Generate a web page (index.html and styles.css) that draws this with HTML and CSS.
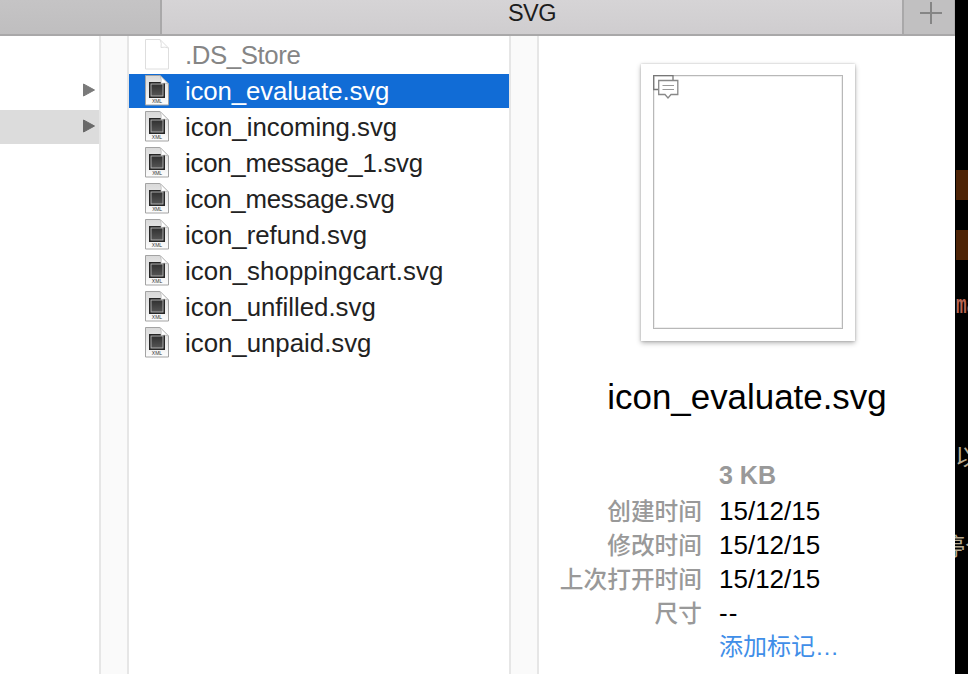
FILE: index.html
```html
<!DOCTYPE html>
<html lang="zh-CN">
<head>
<meta charset="utf-8">
<title>SVG</title>
<link rel="stylesheet" href="styles.css">
</head>
<body>
<svg width="0" height="0" class="defs" aria-hidden="true">
  <defs>
    <linearGradient id="paper" x1="0" y1="0" x2="0" y2="1"><stop offset="0" stop-color="#d9d9d9"/><stop offset="1" stop-color="#fdfdfd"/></linearGradient>
    <linearGradient id="chip" x1="0" y1="0" x2="0" y2="1"><stop offset="0" stop-color="#303030"/><stop offset="1" stop-color="#555"/></linearGradient>
    <symbol id="xml" viewBox="0 0 26 32">
      <path d="M1.500 1.500H16L24.500 10V31H1.500Z" fill="url(#paper)" stroke="#a3a3a3"/>
      <rect x="5" y="8" width="16" height="16" fill="#262626"/>
      <rect x="7" y="10" width="12" height="12" fill="url(#chip)" stroke="#b8b8b8" stroke-width=".9"/>
      <path d="M16 1.500Q18 5 17 9.500Q21 8.500 24.500 10Z" fill="#fff" stroke="#b5b5b5" stroke-width=".7"/>
      <text x="13" y="29.300" text-anchor="middle" class="xml-label">XML</text>
    </symbol>
  </defs>
</svg>
<div class="screen">
  <main class="finder">
    <header class="tabs">
      <div class="tab"></div>
      <div class="tab active">SVG</div>
      <div class="add"><svg width="24" height="24" viewBox="0 0 24 24"><path d="M1 12H23M12 1V23" stroke="#858585" stroke-width="2"/></svg></div>
    </header>
    <div class="columns">
      <section class="parent">
        <div class="folder"><svg width="14" height="16" viewBox="0 0 14 16"><path d="M1.500 2L12.500 8L1.500 14Z"/></svg></div>
        <div class="folder current"><svg width="14" height="16" viewBox="0 0 14 16"><path d="M1.500 2L12.500 8L1.500 14Z"/></svg></div>
      </section>
      <div class="gutter"></div>
      <section class="files">
        <div class="file hidden"><svg class="icon" viewBox="0 0 26 32"><path d="M1.500 1.500H16L24.500 10V31H1.500ZM16 1.500Q18 5 17 9.500Q21 8.500 24.500 10" fill="#fff" stroke="#dedede"/></svg><span>.DS_Store</span></div>
        <div class="file selected"><svg class="icon"><use href="#xml"/></svg><span>icon_evaluate.svg</span></div>
        <div class="file"><svg class="icon"><use href="#xml"/></svg><span>icon_incoming.svg</span></div>
        <div class="file snug"><svg class="icon"><use href="#xml"/></svg><span>icon_message_1.svg</span></div>
        <div class="file snug"><svg class="icon"><use href="#xml"/></svg><span>icon_message.svg</span></div>
        <div class="file"><svg class="icon"><use href="#xml"/></svg><span>icon_refund.svg</span></div>
        <div class="file roomy"><svg class="icon"><use href="#xml"/></svg><span>icon_shoppingcart.svg</span></div>
        <div class="file"><svg class="icon"><use href="#xml"/></svg><span>icon_unfilled.svg</span></div>
        <div class="file"><svg class="icon"><use href="#xml"/></svg><span>icon_unpaid.svg</span></div>
      </section>
      <div class="gutter"></div>
      <section class="preview">
        <div class="sheet"><div class="page"><svg width="28" height="26" viewBox="0 0 28 26" fill="none"><path d="M5 14.500H.7V.7H20V5" stroke="#777" stroke-width="1.300"/><path d="M5.700 5.500H24.800V19.500H18L15 23L12 19.500H5.700Z" fill="#fff" stroke="#888" stroke-width="1.300"/><path d="M9.500 10.500H21M9.500 14.500H21" stroke="#999"/></svg></div></div>
        <h1>icon_evaluate.svg</h1>
        <dl>
          <dt></dt><dd class="size">3 KB</dd>
          <dt>创建时间</dt><dd>15/12/15</dd>
          <dt>修改时间</dt><dd>15/12/15</dd>
          <dt>上次打开时间</dt><dd>15/12/15</dd>
          <dt>尺寸</dt><dd class="dashes">--</dd>
          <dt></dt><dd class="tag">添加标记…</dd>
        </dl>
      </section>
    </div>
  </main>
  <aside class="editor">
    <div class="mark"></div>
    <div class="mark second"></div>
    <div class="code name">ma</div>
    <div class="code zh">以</div>
    <div class="code zh last">停个</div>
  </aside>
</div>
</body>
</html>
```
FILE: styles.css
```css
* { box-sizing: border-box; }
body { margin: 0; overflow: hidden; background: #000; font-family: "Liberation Sans", "Noto Sans CJK SC", sans-serif; }
.defs { position: absolute; }
.screen { display: flex; width: 968px; height: 674px; }
.finder { width: 955px; flex: none; background: #fff; display: flex; flex-direction: column; }
.tabs { display: flex; height: 36px; border-bottom: 2px solid #a9a8a9; background: #c1c0c1; }
.tab { width: 162px; border-right: 2px solid #a9a8a9; background: linear-gradient(#c5c4c5, #bfbebf); }
.tab.active { width: 742px; background: linear-gradient(#d6d4d6, #cfcdcf); font-size: 23.5px; letter-spacing: -.5px; line-height: 26px; text-align: center; color: #1c1c1c; }
.add { flex: 1; border-right: 1px solid #b1b0b1; padding: 1px 0 0 15px; }
.add svg { display: block; }
.columns { display: flex; flex: 1; }
.parent { width: 99px; padding-top: 38px; }
.folder { height: 34px; margin-bottom: 2px; display: flex; align-items: center; justify-content: flex-end; padding: 0 3px 2px 0; }
.folder path { fill: #7a7a7a; stroke: #7a7a7a; stroke-linejoin: round; }
.folder.current { background: #dcdcdc; }
.folder.current path { fill: #696969; stroke: #696969; }
.gutter { width: 30px; border: solid #e6e6e6; border-width: 0 2px; background: #fafafa; }
.files { width: 380px; padding-top: 2px; }
.file { display: flex; align-items: flex-start; height: 34px; margin-bottom: 2px; padding-left: 15px; gap: 15px; font-size: 25.8px; line-height: 35px; color: #222; }
.icon { width: 26px; height: 32px; flex: none; }
.xml-label { font: 5px "Liberation Sans", sans-serif; fill: #333; }
.file.hidden { color: #858585; letter-spacing: -.4px; }
.file.selected { background: #116cd6; color: #fff; letter-spacing: -.13px; }
.file.snug { letter-spacing: -.25px; }
.file.roomy { letter-spacing: .08px; }
.preview { flex: 1; padding-top: 28px; display: flex; flex-direction: column; align-items: center; }
.sheet { width: 214px; height: 277px; margin-left: 1px; padding: 11px 11px 12px 12px; background: #fff; box-shadow: 0 2px 5px rgba(0,0,0,.3), 0 0 2px rgba(0,0,0,.2); }
.page { width: 190px; height: 254px; border: 1px solid #b8b8b8; outline: 1px solid #eee; outline-offset: -2px; }
.page svg { position: relative; display: block; margin: -1px 0 0 -1px; }
h1 { margin: 35px 0 0; font-size: 34.9px; line-height: 41px; font-weight: 400; color: #000; }
dl { display: grid; grid-template-columns: 163px 220px; column-gap: 17px; grid-template-rows: 36px repeat(5, 34px); line-height: 34px; margin: 41px 0 0; align-self: flex-start; }
dt, dd { margin: 0; white-space: nowrap; }
dt { text-align: right; color: #999; font-size: 23.7px; line-height: 32px; font-weight: 500; font-family: "Noto Sans CJK SC", sans-serif; }
dd { color: #000; font-size: 26px; }
.size { color: #999; font-weight: 700; font-size: 25px; }
.dashes { letter-spacing: 1px; }
.tag { color: #3f8ee8; font-size: 24px; line-height: 33px; font-weight: 400; font-family: "Liberation Sans", "Noto Sans CJK SC", sans-serif; }
.editor { width: 13px; overflow: hidden; padding: 170px 0 0 1px; background: #000; }
.mark { height: 30px; background: #4e2407; }
.mark.second { margin-top: 30px; }
.code { white-space: nowrap; line-height: 30px; }
.name { margin-top: 30px; font: bold 26px/32px "Liberation Mono", monospace; color: #b96552; transform: scaleX(.68); transform-origin: 0 50%; }
.zh { margin: 118px 0 0 -1px; font-size: 24px; color: #b5a88f; font-family: "Noto Sans CJK SC", sans-serif; }
.zh.last { margin: 60px 0 0 -15px; }
```
